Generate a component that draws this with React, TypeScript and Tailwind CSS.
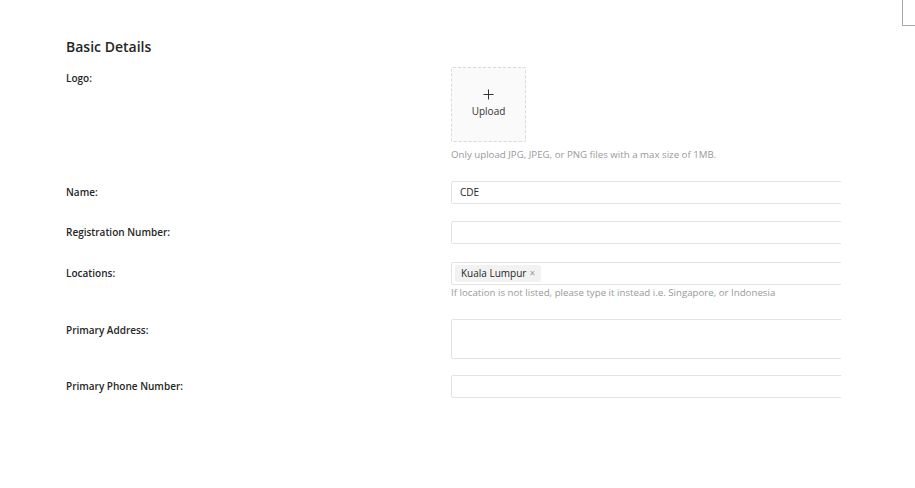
import React from "react";

function Label({ text }: { text: string }) {
  return (
    <div className="w-[385px] shrink-0 h-[23px] leading-[23px] text-[10px] font-semibold text-[#262626]">
      {text}:
    </div>
  );
}

function Field({ children }: { children?: React.ReactNode }) {
  return (
    <div className="h-[23px] w-[420px] shrink-0 border border-[#e3e3e3] rounded-[2px] bg-white flex items-center px-2 text-[10px] text-[#262626]">
      {children}
    </div>
  );
}

export default function App() {
  return (
    <div
      className="relative w-[915px] h-[488px] bg-white overflow-hidden"
      style={{ fontFamily: '"Open Sans", "Noto Sans", sans-serif' }}
    >
      <div className="absolute right-0 top-0 w-[13px] h-[26px] border-l border-b border-[#a6a6a6]" />
      <div className="ml-[66px] w-[775px] overflow-hidden pt-[36px]">
        <h2 className="text-[14px] font-semibold text-[#262626] leading-[22px]">Basic Details</h2>

        <div className="flex mt-[9px]">
          <Label text="Logo" />
          <div>
            <div className="w-[75px] h-[75px] border border-dashed border-[#d9d9d9] bg-[#fafafa] rounded-[2px] flex flex-col items-center pt-[21px] text-[#333]">
              <svg width="11" height="11" viewBox="0 0 11 11" className="block">
                <path d="M5.5 0.5v10M0.5 5.5h10" stroke="#333" strokeWidth="1" fill="none" />
              </svg>
              <span className="text-[10px] leading-[14px] mt-[4px]">Upload</span>
            </div>
            <p className="mt-[6px] text-[9.7px] leading-[14px] text-[#999]">
              Only upload JPG, JPEG, or PNG files with a max size of 1MB.
            </p>
          </div>
        </div>

        <div className="flex mt-[19px]">
          <Label text="Name" />
          <Field>CDE</Field>
        </div>

        <div className="flex mt-[17px]">
          <Label text="Registration Number" />
          <Field />
        </div>

        <div className="flex mt-[18px]">
          <Label text="Locations" />
          <div className="shrink-0">
            <div className="h-[23px] w-[420px] border border-[#e3e3e3] rounded-[2px] bg-white flex items-center px-[3px]">
              <span className="h-[17px] bg-[#f2f2f2] rounded-[2px] px-[6px] flex items-center text-[10px] text-[#262626] gap-[3px]">
                Kuala Lumpur
                <span className="text-[10px] text-[#999]">×</span>
              </span>
            </div>
            <p className="mt-[1px] text-[9.7px] leading-[14px] text-[#999]">
              If location is not listed, please type it instead i.e. Singapore, or Indonesia
            </p>
          </div>
        </div>

        <div className="flex mt-[19px]">
          <Label text="Primary Address" />
          <div className="h-[40px] w-[420px] shrink-0 border border-[#e3e3e3] rounded-[2px] bg-white" />
        </div>

        <div className="flex mt-[16px]">
          <Label text="Primary Phone Number" />
          <Field />
        </div>
      </div>
    </div>
  );
}
